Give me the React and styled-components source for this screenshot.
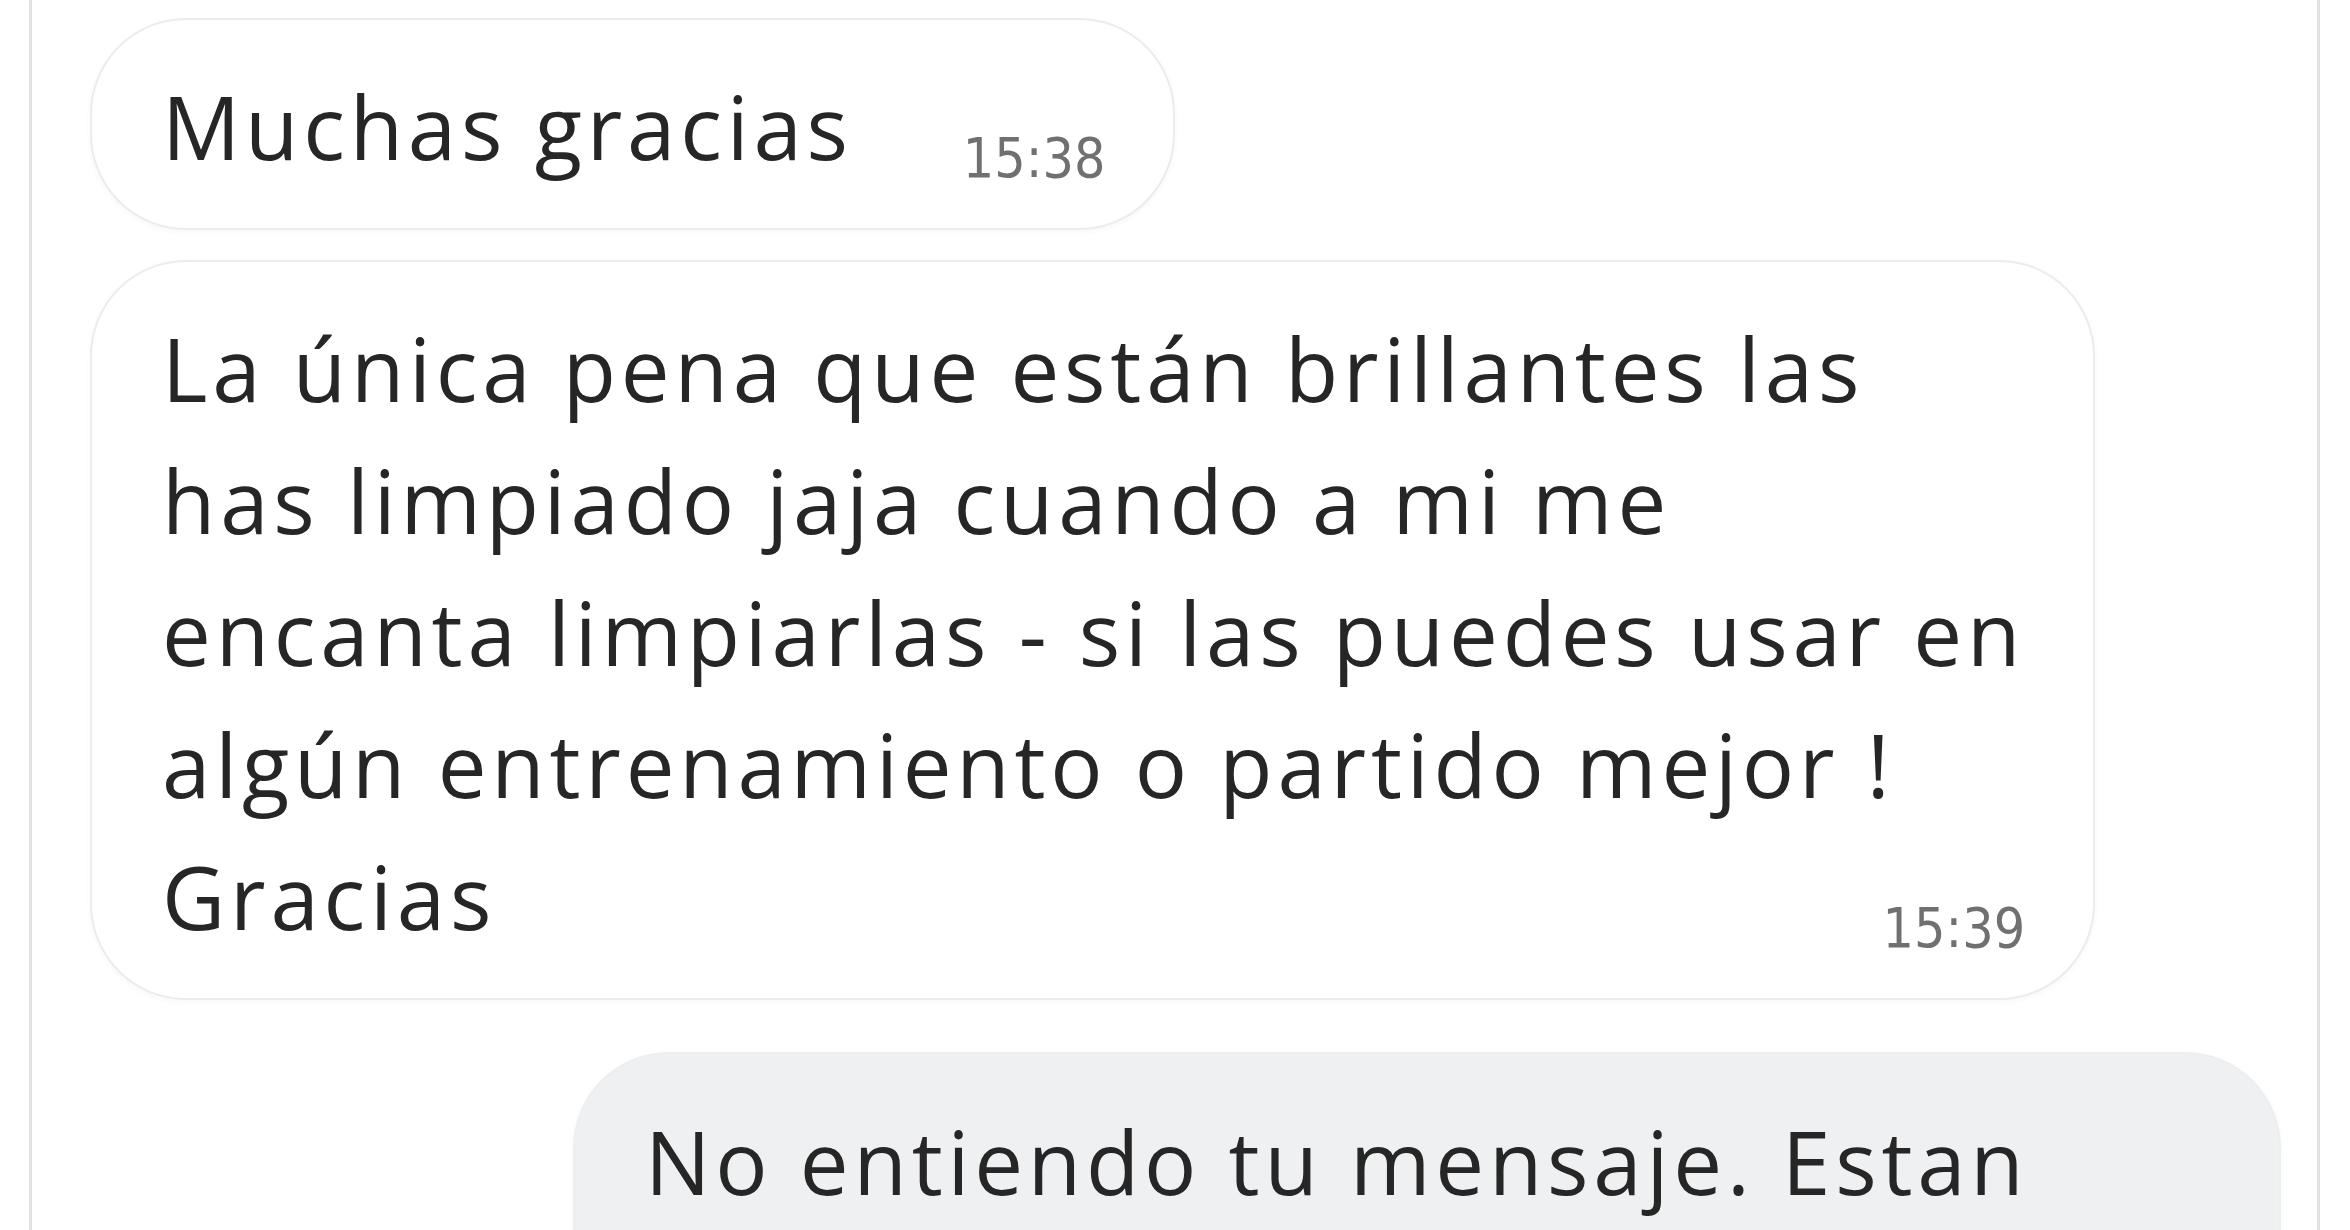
import styled, { createGlobalStyle } from 'styled-components';

const GlobalStyle = createGlobalStyle`
  html, body {
    margin: 0;
    padding: 0;
    background: #ffffff;
    overflow: hidden;
  }
  body {
    font-family: "Open Sans", "Noto Sans", sans-serif;
    color: #262626;
  }
`;

const Thread = styled.div`
  box-sizing: border-box;
  width: 2291px;
  min-height: 1230px;
  margin-left: 29px;
  border-left: 3px solid #e2e2e2;
  border-right: 3px solid #e2e2e2;
  padding: 18px 36px 0 58px;
  display: flex;
  flex-direction: column;
`;

const Row = styled.div`
  display: flex;
  justify-content: ${(p) => (p.$mine ? 'flex-end' : 'flex-start')};
  margin-bottom: ${(p) => p.$gap}px;
`;

const Bubble = styled.div`
  box-sizing: border-box;
  display: grid;
  grid-template-columns: 1fr auto;
  column-gap: ${(p) => (p.$stacked ? 0 : 110)}px;
  padding: ${(p) => (p.$mine ? '41px 72px 120px 70px' : '40px 68px 36px 70px')};
  border-radius: 96px;
  background: ${(p) => (p.$mine ? '#eff0f2' : '#ffffff')};
  border: 2px solid ${(p) => (p.$mine ? '#eceef0' : '#ececec')};
  box-shadow: 0 2px 6px rgba(0, 0, 0, 0.035);
`;

const Body = styled.div`
  grid-row: 1;
  grid-column: ${(p) => (p.$stacked ? '1 / -1' : '1')};
  font-size: 87px;
  line-height: 132px;
  letter-spacing: 4.8px;
  white-space: pre-line;
  color: #262626;
`;

const Time = styled.span`
  grid-row: 1;
  grid-column: 2;
  align-self: end;
  margin-bottom: 6px;
  font-family: "DejaVu Sans Condensed", "DejaVu Sans", sans-serif;
  font-size: 55px;
  line-height: 1;
  color: #6f7071;
`;

const messages = [
  { id: 1, text: 'Muchas gracias', time: '15:38', gap: 30 },
  {
    id: 2,
    text: 'La única pena que están brillantes las\nhas limpiado jaja cuando a mi me\nencanta limpiarlas - si las puedes usar en\nalgún entrenamiento o partido mejor !\nGracias',
    time: '15:39',
    stacked: true,
    gap: 52,
  },
  { id: 3, text: 'No entiendo tu mensaje. Estan', mine: true, width: 1708 },
];

function Message({ msg }) {
  return (
    <Row $mine={msg.mine} $gap={msg.gap || 0}>
      <Bubble $mine={msg.mine} $stacked={msg.stacked} style={msg.width ? { width: msg.width } : undefined}>
        <Body $stacked={msg.stacked}>{msg.text}</Body>
        {msg.time && <Time>{msg.time}</Time>}
      </Bubble>
    </Row>
  );
}

export default function App() {
  return (
    <>
      <GlobalStyle />
      <Thread>
        {messages.map((m) => (
          <Message key={m.id} msg={m} />
        ))}
      </Thread>
    </>
  );
}
